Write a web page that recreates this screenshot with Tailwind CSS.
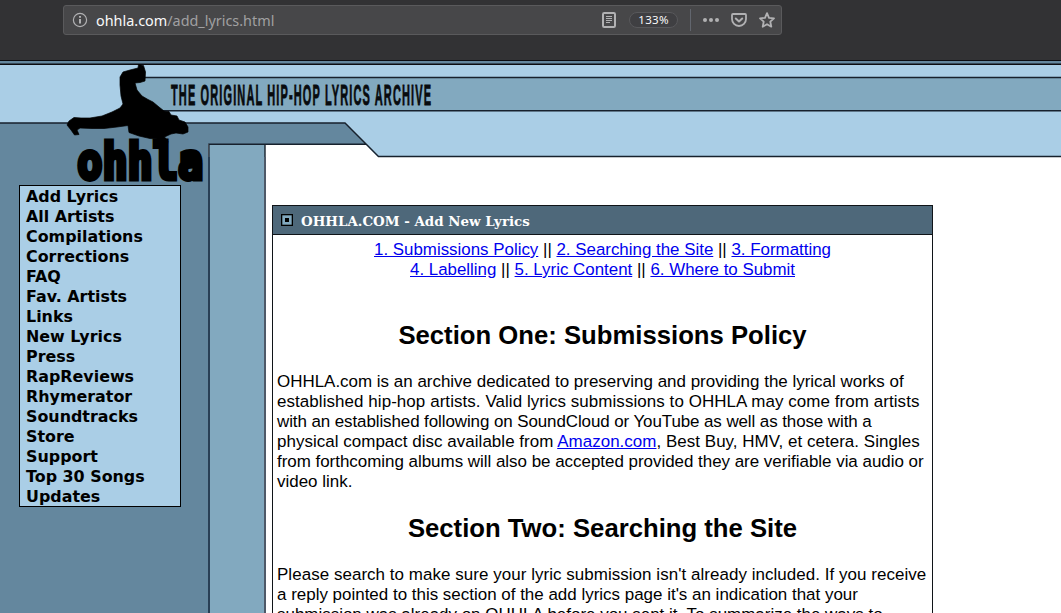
<!DOCTYPE html>
<html lang="en">
<head>
<meta charset="utf-8">
<title>OHHLA.COM - Add New Lyrics</title>
<script src="https://cdn.jsdelivr.net/npm/@tailwindcss/browser@4"></script>
</head>
<body class="h-[613px] overflow-hidden bg-white flex flex-col font-['Liberation_Sans',sans-serif] text-black">
<div class="h-[60px] shrink-0 bg-[#323234] pt-[5px] pl-[63px]">
  <div class="w-[719px] h-[30px] rounded-[3px] border border-[#5a5a5c] bg-[#474749] flex items-center text-[#b1b1b3]">
    <svg class="ml-[8px] w-4 h-4 shrink-0" viewBox="0 0 16 16" fill="none" stroke="currentColor"><circle cx="8" cy="8" r="6.6" stroke-width="1.2"/><path d="M8 7v4.5M8 4v1.8" stroke-width="2"/></svg>
    <div class="ml-[8px] w-[505px] text-[14.4px] leading-5 whitespace-nowrap font-['Noto_Sans',sans-serif] text-[#a0a0a2] pt-px"><span class="text-[#f9f9fa]">ohhla.com</span>/add_lyrics.html</div>
    <svg class="w-4 h-4 shrink-0" viewBox="0 0 16 16" fill="none" stroke="currentColor"><rect x="2" y="1" width="12" height="14" rx="1.2" stroke-width="2"/><path d="M5 4.500h6M5 6.500h6M5 8.500h6M5 10.500h4"/></svg>
    <div class="ml-3 w-[49px] h-4 shrink-0 rounded-full border border-[#58585b] bg-[#3f3f42] text-[11.5px] leading-[14px] tracking-[.3px] text-center text-[#f9f9fa] font-['Noto_Sans',sans-serif]">133%</div>
    <div class="ml-3 w-px h-[22px] bg-[#62666e]"></div>
    <svg class="ml-3 w-4 h-4 shrink-0" viewBox="0 0 16 16" fill="currentColor"><circle cx="2" cy="8" r="2"/><circle cx="8" cy="8" r="2"/><circle cx="14" cy="8" r="2"/></svg>
    <svg class="ml-3 w-4 h-4 shrink-0" viewBox="0 0 16 16" fill="none" stroke="currentColor" stroke-width="2" stroke-linecap="round" stroke-linejoin="round"><path d="M2 2h12a1 1 0 0 1 1 1v4a7 7 0 0 1-14 0V3a1 1 0 0 1 1-1z" stroke-width="1.8"/><path d="M4.800 6.500 8 9.500l3.200-3"/></svg>
    <svg class="ml-3 w-4 h-4 shrink-0" viewBox="0 0 16 16" fill="none" stroke="currentColor" stroke-width="1.8" stroke-linejoin="round"><path d="m8 1.200 2 4.600 5 .5-3.700 3.400 1 5L8 12.200l-4.300 2.500 1-5L1 6.300l5-.5z"/></svg>
  </div>
</div>
<header class="h-[97px] shrink-0 relative z-10">
  <svg class="block w-[1061px] h-[125px] overflow-visible" viewBox="0 60 1061 125">
    <path fill="#aacee6" d="M0 60H1061V157H378L345 123H0z"/>
    <path fill="#64879e" d="M0 60H1061V64H0zM0 123H345L366 144H208V157H0z"/>
    <path fill="#82a9bf" d="M130 78H1061V111H130zM209 145h56v12h-56z"/>
    <path fill="#0b0c10" d="M0 60h1061v1H0zM0 63.500h1061V65H0z"/>
    <path fill="none" stroke="#17212d" stroke-width="1.400" d="M130 77.500H1061M130 110.800H1061M0 123H345L378.500 156.500H1061M208.900 157V144.300H366M265 157V145"/>
    <path fill="#000" stroke="#000" stroke-width=".7" stroke-linejoin="round" d="M138.500 64.500L143.500 65.500 145.500 72 145 81 140 82.500 135 83 137 90 142 96 148 99.500 153 102 159 107 164 111 169 111.500 171 115 177 116 179 120 185 122 188 127 188 132 183 134 176 133 171 134 164.500 137 168 141 167.500 144 160 145.500 157.500 143.500 158 139 150 138.500 139 136 129 132.500 128 125.500 117 127 104 128.500 92 128.500 80 128 77 130 79 134.500 74.500 135 71 130 67 125 69 121 74 117.500 81 118 90 118 102 116 112 112 120 108 123 104 121 96 120 85 120 77 123 72 130 70 138 68z"/>
    <text transform="translate(77.200 179)scale(1 1.040)" textLength="126" lengthAdjust="spacingAndGlyphs" font-family="'DejaVu Sans Mono',monospace" font-weight="700" font-size="48.500" stroke="#000" stroke-width="4.600">ohhla</text>
    <text transform="translate(171 105)scale(1 2.650)" textLength="260" lengthAdjust="spacing" font-family="'Liberation Sans Narrow','Liberation Sans',sans-serif" font-weight="700" font-size="11" fill="#080b0e" stroke="#080b0e" stroke-width=".3">THE ORIGINAL HIP-HOP LYRICS ARCHIVE</text>
  </svg>
</header>
<div class="flex flex-1 min-h-0">
  <aside class="w-[208px] shrink-0 bg-[#64879e] pt-7 pl-[19px]">
    <nav class="w-[162px] h-[322px] border border-black bg-[#aacee6] pl-1.5 pt-px flex flex-col font-['DejaVu_Sans',sans-serif] font-bold text-[15.9px] leading-5">
      <a>Add Lyrics</a><a>All Artists</a><a>Compilations</a><a>Corrections</a><a>FAQ</a><a>Fav. Artists</a><a>Links</a><a>New Lyrics</a><a>Press</a><a>RapReviews</a><a>Rhymerator</a><a>Soundtracks</a><a>Store</a><a>Support</a><a>Top 30 Songs</a><a>Updates</a>
    </nav>
  </aside>
  <div class="w-[58px] shrink-0 border-l-2 border-r-2 border-l-[#293f55] border-r-[#4e5968] bg-[#82a9bf]"></div>
  <main class="ml-1.5 mt-12 w-[661px] border border-[#101418] border-b-0 text-[16.97px] leading-5 overflow-hidden">
    <div class="h-[29px] border-b border-[#101418] bg-[#4e687a] flex items-center pl-2">
      <svg class="w-3 h-3 shrink-0" viewBox="0 0 12 12"><path d="M0 0h12v12H0z"/><path fill="#82a9bf" d="M1.300 1.300h9.400v9.400H1.300z"/><path d="M4 4h4v4H4z"/></svg>
      <div class="ml-2 mt-0.5 text-white font-bold text-[13.4px] font-['DejaVu_Serif',serif] whitespace-nowrap">OHHLA.COM - Add New Lyrics</div>
    </div>
    <div class="px-1">
      <p class="pt-[5px] text-center whitespace-nowrap text-[16.9px] [&_a]:text-[#0000ee] [&_a]:underline"><a>1. Submissions Policy</a> || <a>2. Searching the Site</a> || <a>3. Formatting</a><br><a>4. Labelling</a> || <a>5. Lyric Content</a> || <a>6. Where to Submit</a></p>
      <h2 class="mt-10 text-center text-[25.7px] leading-[30px] font-bold">Section One: Submissions Policy</h2>
      <p class="mt-[22px] whitespace-nowrap">OHHLA.com is an archive dedicated to preserving and providing the lyrical works of<br><span class="tracking-[0.07px]">established hip-hop artists. Valid lyrics submissions to OHHLA may come from artists</span><br><span class="tracking-[-0.09px]">with an established following on SoundCloud or YouTube as well as those with a</span><br><span class="tracking-[0.035px]">physical compact disc available from <a class="text-[#0000ee] underline">Amazon.com</a>, Best Buy, HMV, et cetera. Singles</span><br><span class="tracking-[-0.02px]">from forthcoming albums will also be accepted provided they are verifiable via audio or</span><br>video link.</p>
      <h2 class="mt-[21px] text-center text-[25.7px] leading-[30px] font-bold">Section Two: Searching the Site</h2>
      <p class="mt-[22px] whitespace-nowrap"><span class="tracking-[0.05px]">Please search to make sure your lyric submission isn't already included. If you receive</span><br>a reply pointed to this section of the add lyrics page it's an indication that your<br>submission was already on OHHLA before you sent it. To summarize the ways to</p>
    </div>
  </main>
</div>
</body>
</html>
